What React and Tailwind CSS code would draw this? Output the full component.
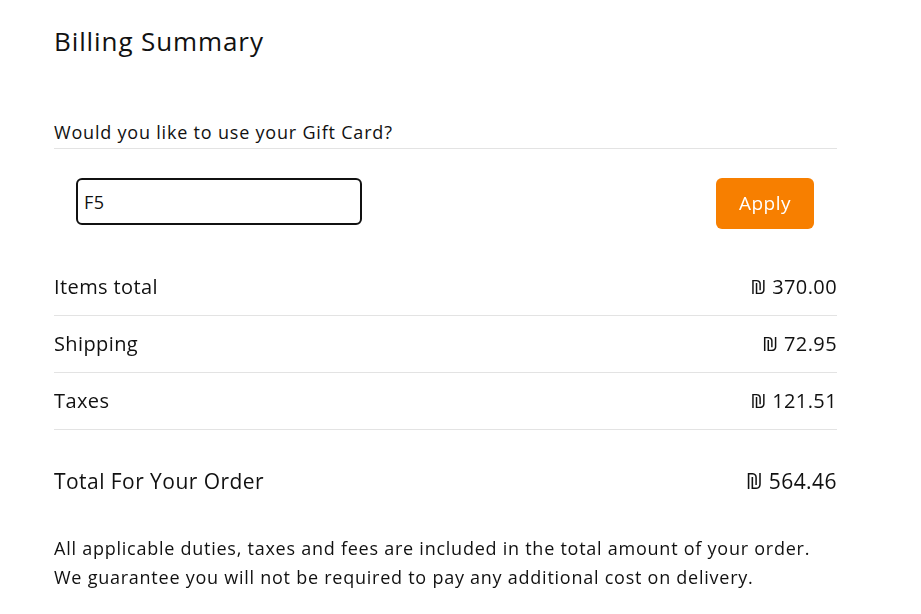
import React, { useState } from 'react';

const rows = [
  { label: 'Items total', amount: '370.00' },
  { label: 'Shipping', amount: '72.95' },
  { label: 'Taxes', amount: '121.51' },
];

const App = () => {
  const [code, setCode] = useState('F5');

  return (
    <div className="min-h-screen bg-white text-[#111] font-['Open_Sans',sans-serif]">
      <div className="w-[783px] ml-[54px] pt-[24px]">
        <h1 className="text-[26px] leading-[34px] tracking-[0.9px]">Billing Summary</h1>

        <div className="mt-[61px] pb-[3px] border-b border-[#e3e3e3] text-[18px] leading-[26px] tracking-[0.8px]">
          Would you like to use your Gift Card?
        </div>

        <div className="flex items-start justify-between pl-[22px] pr-[23px] pt-[29px] pb-[30px]">
          <input
            value={code}
            onChange={e => setCode(e.target.value)}
            className="w-[286px] h-[47px] border-2 border-[#111] rounded-[6px] px-[6px] text-[18px] tracking-[0.5px] outline-none"
            autoFocus
          />
          <button className="w-[98px] h-[51px] rounded-[6px] bg-[#f77f00] text-white text-[19px] tracking-[0.5px]">
            Apply
          </button>
        </div>

        {rows.map(row => (
          <div
            key={row.label}
            className="flex items-center justify-between h-[57px] border-b border-[#e3e3e3] text-[20px] tracking-[0.4px]"
          >
            <span>{row.label}</span>
            <span>₪ {row.amount}</span>
          </div>
        ))}

        <div className="flex items-center justify-between pt-[37px] text-[21px] leading-[28px] tracking-[0.45px]">
          <span>Total For Your Order</span>
          <span>₪ 564.46</span>
        </div>

        <p className="mt-[39px] text-[18px] leading-[29px] tracking-[0.75px]">
          All applicable duties, taxes and fees are included in the total amount of your order.
          <br />
          We guarantee you will not be required to pay any additional cost on delivery.
        </p>
      </div>
    </div>
  );
};

export default App;
